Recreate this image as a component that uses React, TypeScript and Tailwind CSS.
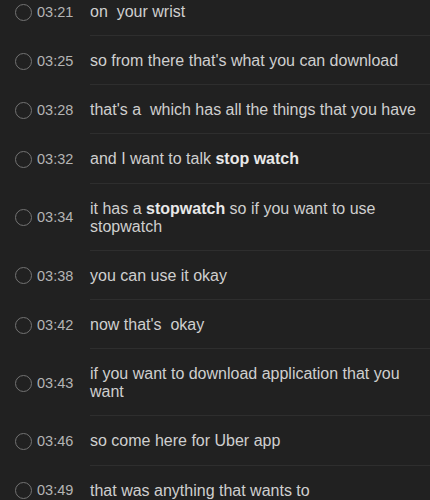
import {ReactElement, ReactNode} from 'react';

type Line = {
    time: string,
    text: ReactNode,
};

const lines: Line[] = [
    {time: '03:21', text: 'on  your wrist'},
    {time: '03:25', text: "so from there that's what you can download"},
    {time: '03:28', text: "that's a  which has all the things that you have"},
    {time: '03:32', text: <>and I want to talk <b className="font-bold text-[#e8e8e8]">stop watch</b></>},
    {time: '03:34', text: <>it has a <b className="font-bold text-[#e8e8e8]">stopwatch</b> so if you want to use stopwatch</>},
    {time: '03:38', text: 'you can use it okay'},
    {time: '03:42', text: "now that's  okay"},
    {time: '03:43', text: 'if you want to download application that you want'},
    {time: '03:46', text: 'so come here for Uber app'},
    {time: '03:49', text: 'that was anything that wants to'},
];

export default function App(): ReactElement {
    return (
        <div className="h-[500px] w-[430px] overflow-hidden bg-[#212121] font-['Liberation_Sans',Arial,sans-serif]">
            <ul className="-mt-[13.2px]">
                {lines.map(
                    (line, index) => (
                        <li key={line.time} className="flex items-stretch">
                            <div className="flex w-[90px] flex-none items-center pt-[3px] pl-[15px]">
                                <span className="h-[17px] w-[17px] flex-none rounded-full border-[1.5px] border-[#737373]" />
                                <span className="ml-[5px] text-[14.5px] leading-none text-[#b4b4b4]">{line.time}</span>
                            </div>
                            <div
                                className={
                                    index === 0
                                        ? 'min-w-0 flex-1 pt-4 pr-1 pb-[14.2px] text-[16px] leading-[18px] whitespace-pre-wrap text-[#cfcfcf]'
                                        : 'min-w-0 flex-1 border-t border-[#2e2e2e] pt-4 pr-1 pb-[14.2px] text-[16px] leading-[18px] whitespace-pre-wrap text-[#cfcfcf]'
                                }
                            >
                                {line.text}
                            </div>
                        </li>
                    ),
                )}
            </ul>
        </div>
    );
}
